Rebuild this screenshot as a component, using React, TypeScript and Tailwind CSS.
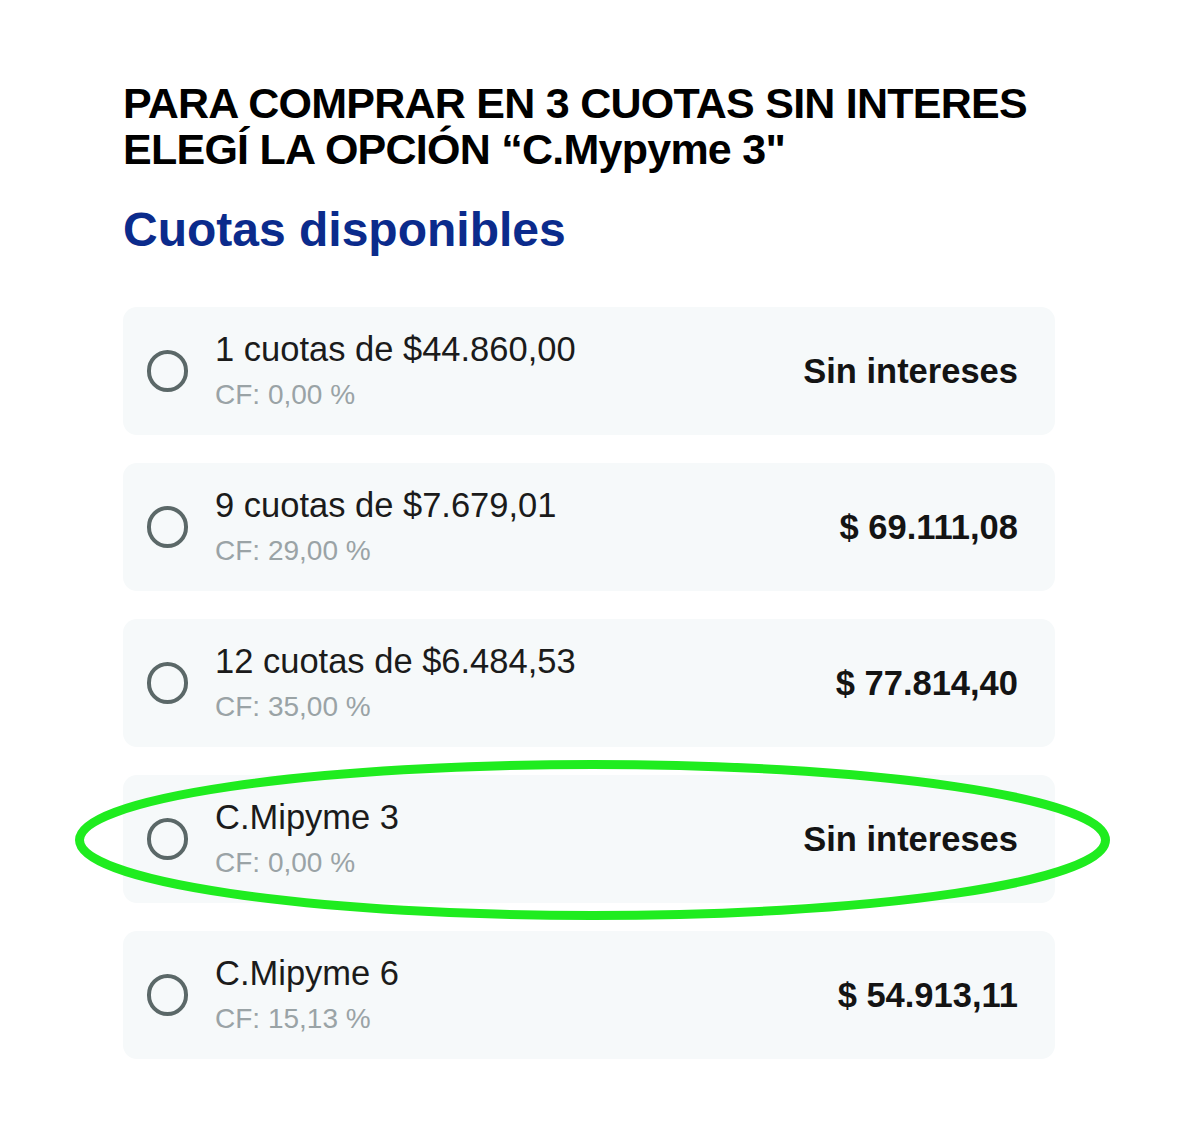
import React from 'react';

type Cuota = {
  title: string;
  cf: string;
  right: string;
  highlight?: boolean;
};

const cuotas: Cuota[] = [
  { title: '1 cuotas de $44.860,00', cf: 'CF: 0,00 %', right: 'Sin intereses' },
  { title: '9 cuotas de $7.679,01', cf: 'CF: 29,00 %', right: '$ 69.111,08' },
  { title: '12 cuotas de $6.484,53', cf: 'CF: 35,00 %', right: '$ 77.814,40' },
  { title: 'C.Mipyme 3', cf: 'CF: 0,00 %', right: 'Sin intereses', highlight: true },
  { title: 'C.Mipyme 6', cf: 'CF: 15,13 %', right: '$ 54.913,11' },
];

const Radio: React.FC = () => (
  <div className="w-[41px] h-[42px] shrink-0 rounded-full border-[4px] border-[#5b6868]" />
);

const CuotaRow: React.FC<{ cuota: Cuota }> = ({ cuota }) => (
  <div className="relative h-[128px] rounded-[14px] bg-[#f6f9fa] flex items-center gap-[27px] pl-[24px] pr-[37px]">
    <Radio />
    <div className="flex-1 flex flex-col">
      <span className="text-[34.5px] leading-[44px] text-[#1b1b1b]">{cuota.title}</span>
      <span className="text-[28px] leading-[44px] text-[#9aa3a6] translate-y-[2px]">{cuota.cf}</span>
    </div>
    <span className="text-[34.5px] leading-[44px] font-bold text-[#141414]">{cuota.right}</span>
    {cuota.highlight && (
      <svg
        className="absolute left-[-48px] top-[-15px] pointer-events-none"
        width="1035"
        height="160"
        viewBox="0 0 1035 160"
      >
        <ellipse cx="517.5" cy="80" rx="513" ry="75.5" fill="none" stroke="#1fec1f" strokeWidth="9" />
      </svg>
    )}
  </div>
);

export default function App() {
  return (
    <div className="w-[1200px] h-[1146px] bg-white font-['Liberation_Sans',Arial,sans-serif]">
      <div className="pl-[123px] pt-[80px] w-[1055px]">
        <h1 className="text-[43px] leading-[46px] font-bold tracking-[-0.75px] text-black">
          PARA COMPRAR EN 3 CUOTAS SIN INTERES
          <br />
          ELEGÍ LA OPCIÓN “C.Mypyme 3"
        </h1>
        <h2 className="mt-[30px] text-[48px] leading-[56px] font-bold text-[#0b2b8c]">Cuotas disponibles</h2>
        <div className="mt-[49px] flex flex-col gap-[28px]">
          {cuotas.map((c) => (
            <CuotaRow key={c.title} cuota={c} />
          ))}
        </div>
      </div>
    </div>
  );
}
